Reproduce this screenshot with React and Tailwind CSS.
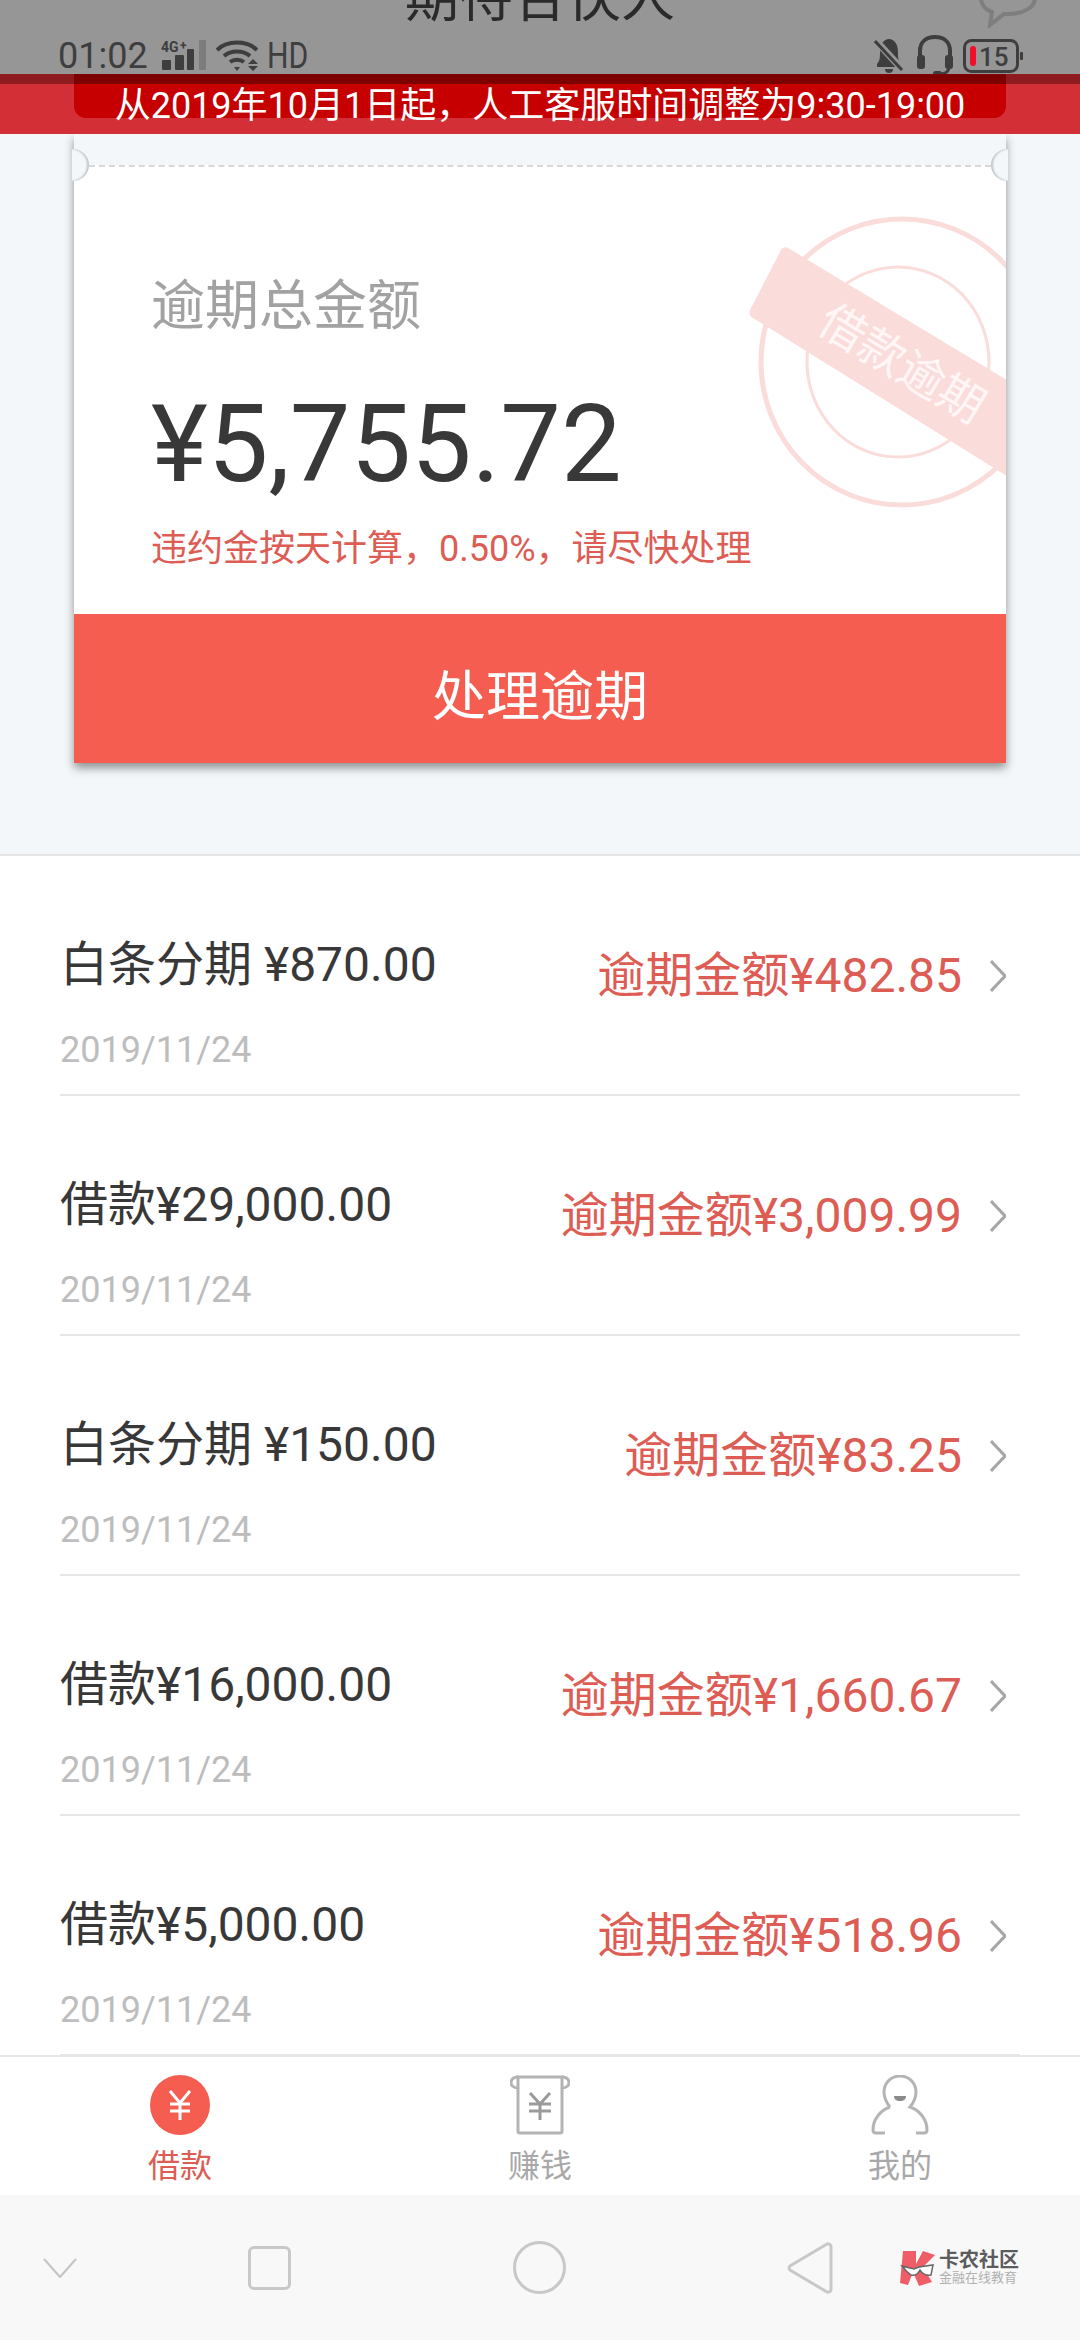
const rows = [
  { title: '白条分期 ¥870.00', amount: '逾期金额¥482.85' },
  { title: '借款¥29,000.00', amount: '逾期金额¥3,009.99' },
  { title: '白条分期 ¥150.00', amount: '逾期金额¥83.25' },
  { title: '借款¥16,000.00', amount: '逾期金额¥1,660.67' },
  { title: '借款¥5,000.00', amount: '逾期金额¥518.96' },
]

function StatusBar() {
  return (
    <div className="relative flex items-center h-[74px] pl-[58px] pr-[57px] pt-[37px] text-[#3e3e3e] text-[36px] leading-[36px]">
      <span>01:02</span>
      <svg className="ml-[13px]" width="46" height="32" viewBox="0 0 46 32">
        <text x="0" y="12" fontSize="14" fontWeight="700" fill="#3e3e3e">4G</text>
        <text x="19" y="10" fontSize="12" fontWeight="700" fill="#3e3e3e">+</text>
        <rect x="1" y="20" width="9" height="10" rx="1" fill="#3e3e3e" />
        <rect x="14" y="15" width="9" height="15" rx="1" fill="#3e3e3e" />
        <rect x="26" y="9" width="7" height="21" rx="1" fill="#3e3e3e" />
        <rect x="38" y="0" width="7" height="30" rx="1" fill="#7c7c7c" />
      </svg>
      <svg className="ml-[9px]" width="42" height="32" viewBox="0 0 42 32" fill="none" stroke="#3e3e3e" strokeWidth="4">
        <path d="M1 10C11 0 31 0 41 10" />
        <path d="M8 16C15 10 27 10 34 16" />
        <path d="M14 22C18 19 24 19 28 22" />
        <path d="M18 27h6l-3 4z" fill="#3e3e3e" stroke="none" />
        <path d="M32 24l5-5 5 5zM32 26h10l-5 5z" fill="#3e3e3e" stroke="none" />
      </svg>
      <span className="ml-[9px] w-[41px] inline-block origin-left scale-x-[0.84]">HD</span>
      <div className="flex-1" />
      <svg width="30" height="36" viewBox="0 0 30 36">
        <path d="M3 26c3-3 3-7 3-12C6 6 10 1 15 1s9 5 9 13c0 5 0 9 3 12v3H3z" fill="#3e3e3e" />
        <path d="M11 31h8a4 4 0 0 1-8 0z" fill="#3e3e3e" />
        <path d="M2 3l27 29" stroke="#969696" strokeWidth="7" />
        <path d="M1 3l27 29" stroke="#3e3e3e" strokeWidth="3" />
      </svg>
      <svg className="ml-[12px]" width="38" height="42" viewBox="0 0 38 42" fill="none">
        <path d="M4 24V16C4 7 10 2 19 2s15 5 15 14v8" stroke="#3e3e3e" strokeWidth="4" />
        <rect x="1" y="20" width="8" height="14" rx="3" fill="#3e3e3e" />
        <rect x="29" y="20" width="8" height="14" rx="3" fill="#3e3e3e" />
        <path d="M33 32c0 5-5 7-10 7" stroke="#3e3e3e" strokeWidth="3" />
        <rect x="17" y="36" width="9" height="5" rx="2.5" fill="#3e3e3e" />
      </svg>
      <svg className="ml-[9px]" width="60" height="34" viewBox="0 0 60 34" fill="none">
        <rect x="1.5" y="1.5" width="53" height="31" rx="7" stroke="#3e3e3e" strokeWidth="3" />
        <rect x="57" y="13" width="3" height="8" rx="1" fill="#3e3e3e" />
        <rect x="7" y="7" width="6" height="20" rx="3" fill="#f0102a" />
        <text x="16" y="27" fontSize="26" fontWeight="500" fill="#3e3e3e">15</text>
      </svg>
    </div>
  )
}

function Stamp() {
  return (
    <svg className="absolute right-0 top-[45px]" width="266" height="300" viewBox="740 210 266 300" fill="none">
      <ellipse cx="902" cy="362" rx="141" ry="143" stroke="#fadcda" strokeWidth="5" />
      <ellipse cx="898" cy="362" rx="91" ry="95" stroke="#fadcda" strokeWidth="3" />
      <path d="M781 250a5 5 0 0 1 7-2L1010 382V478L753 318a6 6 0 0 1-3-8z" fill="#fadcda" />
      <text
        x="900"
        y="367"
        fontSize="46"
        fill="#fff6f5"
        textAnchor="middle"
        dominantBaseline="middle"
        transform="rotate(31 900 367)"
      >
        借款逾期
      </text>
    </svg>
  )
}

function Notch({ side }) {
  return side === 'left' ? (
    <div className="absolute left-[-2px] top-[-16px] w-[17px] h-[32px] rounded-r-full bg-[#f4f7fa] shadow-[inset_-2px_0_2px_rgba(0,0,0,0.2)]" />
  ) : (
    <div className="absolute right-[-2px] top-[-16px] w-[17px] h-[32px] rounded-l-full bg-[#f4f7fa] shadow-[inset_2px_0_2px_rgba(0,0,0,0.2)]" />
  )
}

function OverdueCard() {
  return (
    <div className="h-[722px] bg-[#f4f7fa] border-b-2 border-[#e6e6e6] px-[74px]">
      <div className="shadow-[0_5px_9px_rgba(0,0,0,0.42)]">
        <div className="h-[31px] bg-[#f4f7fa]" />
        <div className="relative h-[449px] bg-white">
          <div className="absolute left-[15px] right-[15px] top-0 border-t-2 border-dashed border-[#d8d8d8]" />
          <Notch side="left" />
          <Notch side="right" />
          <Stamp />
          <div className="pl-[77px] pt-[115px]">
            <div className="text-[54px] leading-[54px] text-[#a2a2a2]">逾期总金额</div>
            <div className="mt-[56px] text-[108px] leading-[108px] text-[#383838]">¥5,755.72</div>
            <div className="mt-[33px] text-[36px] leading-[36px] text-[#dd5c54]">违约金按天计算，0.50%，请尽快处理</div>
          </div>
        </div>
        <div className="h-[149px] bg-[#f45d50] flex justify-center pt-[57px] text-white text-[54px] leading-[54px]">
          处理逾期
        </div>
      </div>
    </div>
  )
}

function LoanRow({ title, amount }) {
  return (
    <div className="h-[240px] mx-[60px] border-b-2 border-[#e6e6e6] flex justify-between">
      <div className="pt-[85px]">
        <div className="text-[48px] leading-[48px] text-[#383838]">{title}</div>
        <div className="mt-[43px] text-[36px] leading-[36px] text-[#bdbdbd]">2019/11/24</div>
      </div>
      <div className="flex items-center pr-[14px] pt-[2px]">
        <span className="text-[48px] leading-[48px] text-[#dd5c54]">{amount}</span>
        <svg className="ml-[28px]" width="16" height="32" viewBox="0 0 16 32" fill="none" stroke="#a6a6a6" strokeWidth="3">
          <path d="M1 1l14 15L1 31" />
        </svg>
      </div>
    </div>
  )
}

function TabBar() {
  return (
    <div className="h-[140px] bg-white border-t-2 border-[#e6e6e6] -mt-px grid grid-cols-3 pt-[18px] text-[32px] leading-[32px] text-[#a8a8a8]">
      <div className="flex flex-col items-center">
        <div className="w-[60px] h-[60px] rounded-full bg-[#f45d50] flex items-center justify-center">
          <svg width="26" height="30" viewBox="0 0 26 30" fill="none" stroke="#fff" strokeWidth="3">
            <path d="M3 1l10 12L23 1M13 13v17M3 14h20M3 21h20" />
          </svg>
        </div>
        <span className="mt-[15px] text-[#dd5c54]">借款</span>
      </div>
      <div className="flex flex-col items-center">
        <svg width="60" height="60" viewBox="0 0 60 60" fill="none" stroke="#b4b4b4" strokeWidth="3">
          <path d="M8 2h44v54a2 2 0 0 1-2 2H10a2 2 0 0 1-2-2z" />
          <path d="M8 2C2 2 1 6 1 8s2 5 7 5M52 2c6 0 7 4 7 6s-2 5-7 5" />
          <path d="M20 18l10 11 10-11M30 29v16M19 29h22M19 36h22" stroke="#9a9a9a" />
        </svg>
        <span className="mt-[15px]">赚钱</span>
      </div>
      <div className="flex flex-col items-center">
        <svg width="60" height="60" viewBox="0 0 60 60" fill="none" stroke="#b4b4b4" strokeWidth="3">
          <path d="M20 32C16 27 14 23 14 17 14 8 21 1 30 1s16 7 16 16c0 6-2 10-6 15 9 3 17 12 17 23 0 2-1 3-3 3h-8M20 32C11 35 3 44 3 55c0 2 1 3 3 3h9" />
          <path d="M24 21h12c0 3-2 5-6 5s-6-2-6-5z" fill="#8a8a8a" stroke="none" />
        </svg>
        <span className="mt-[15px]">我的</span>
      </div>
    </div>
  )
}

function NavBar() {
  return (
    <div className="flex-1 bg-[#f8f8f8] flex items-center pl-[43px]">
      <svg width="34" height="20" viewBox="0 0 34 20" fill="none" stroke="#c4c4c4" strokeWidth="2">
        <path d="M1 1l16 18L33 1" />
      </svg>
      <div className="ml-[171px] w-[43px] h-[44px] rounded-[6px] border-[3px] border-[#c8c8c8]" />
      <div className="ml-[222px] w-[53px] h-[53px] rounded-full border-[3px] border-[#c8c8c8]" />
      <svg className="ml-[221px]" width="46" height="52" viewBox="0 0 46 52" fill="none" stroke="#c8c8c8" strokeWidth="3">
        <path d="M40 2a3 3 0 0 1 4 2v44a3 3 0 0 1-4 2L3 28a3 3 0 0 1 0-4z" />
      </svg>
      <div className="ml-[67px] flex items-center">
        <svg width="36" height="36" viewBox="0 0 36 36">
          <path d="M3 1h13v13l7-13 12 4-12 12 9 15-13 4-6-14-5 13-8-2z" fill="#ef5d66" />
          <path d="M2 16l12 3 5-2 14-2-2 10c-4 1-9-1-11-5-2 4-5 6-9 5-3-2-6-5-9-9z" fill="#fff" stroke="#666" strokeWidth="1.5" />
        </svg>
        <div className="ml-[3px] flex flex-col w-[80px]">
          <span className="text-[20px] leading-[20px] font-bold text-[#5c5c5c]">卡农社区</span>
          <span className="mt-[1px] text-[13px] leading-[14px] text-[#b0b0b0]">金融在线教育</span>
        </div>
      </div>
    </div>
  )
}

export default function App() {
  return (
    <div className="relative w-[1080px] h-[2340px] overflow-hidden flex flex-col bg-white font-[Roboto,'Noto_Sans_CJK_SC',sans-serif]">
      <div className="relative h-[74px] bg-[#969696]">
        <div className="absolute inset-0 overflow-hidden">
          <div className="absolute left-0 right-0 top-[-28px] text-center text-[54px] leading-[54px] text-[#2a2a2a]">期待合伙人</div>
          <svg className="absolute left-[978px] top-[-22px]" width="60" height="50" viewBox="0 0 60 50" fill="none" stroke="#7e7e7e" strokeWidth="4">
            <path d="M30 2C14 2 3 10 3 20c0 7 5 12 11 14l-2 13 14-11h4c16 0 27-7 27-16S46 2 30 2z" />
          </svg>
        </div>
        <StatusBar />
      </div>
      <div className="relative z-10 h-[60px] bg-[linear-gradient(#8e1b20_0,#8e1b20_10px,#d32f36_10px)]">
        <div className="mx-[74px] h-[44px] rounded-b-[12px] bg-[linear-gradient(#7c0000_0,#7c0000_10px,#c60000_10px)]" />
        <div className="absolute inset-0 flex items-center justify-center pt-[4px] text-white text-[36px] leading-[36px]">
          从2019年10月1日起，人工客服时间调整为9:30-19:00
        </div>
      </div>
      <OverdueCard />
      <div>
        {rows.map((row) => (
          <LoanRow key={row.title} title={row.title} amount={row.amount} />
        ))}
      </div>
      <TabBar />
      <NavBar />
    </div>
  )
}
